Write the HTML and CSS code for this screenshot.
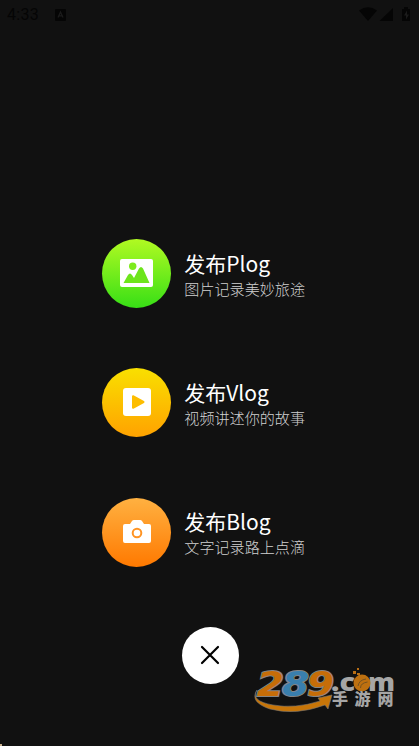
FILE: index.html
```html
<!DOCTYPE html>
<html lang="zh-CN">
<head>
<meta charset="utf-8">
<title>发布</title>
<link rel="stylesheet" href="styles.css">
</head>
<body>
<div class="screen">
  <header class="status">
    <span class="time">4:33</span>
    <svg class="app" width="11" height="12" viewBox="0 0 11 12"><rect width="11" height="12" rx="1" fill="#050505"/><path d="M3 8.5 5.5 3 8 8.5M4 6.8h3" fill="none" stroke="#1b1b1b" stroke-width="1.3"/></svg>
    <svg class="signals" width="54" height="16" viewBox="0 0 54 16" fill="#050505"><path d="M0 3.5Q9-3 18 3.5L9 14Z"/><path d="M34 1v13H20.500Z"/><path d="M45 0h4v2h2v12h-8V2h2z"/><path d="M48 3.500l-3 5h2v4l3-5h-2z" fill="#1b1b1b"/></svg>
  </header>
  <main class="menu">
    <div class="item">
      <span class="disc green"><svg width="33" height="28" viewBox="0 0 33 28"><rect width="33" height="28" rx="2" fill="#fff"/><path d="M3.500 24 8 16Q10 13 12 16L14 19 19 9.500Q21 6.500 23 9.500L29.500 24Z" fill="#6de51b"/><circle cx="12.700" cy="7.300" r="3.700" fill="#7eeb1d"/></svg></span>
      <div class="copy"><h2>发布Plog</h2><p>图片记录美妙旅途</p></div>
    </div>
    <div class="item">
      <span class="disc yellow"><svg width="28" height="28" viewBox="0 0 28 28"><rect width="28" height="28" rx="3" fill="#fff"/><path d="M10 8.200v11.600L20.500 14Z" fill="#fdbd00" stroke="#fdbd00" stroke-width="2" stroke-linejoin="round"/></svg></span>
      <div class="copy"><h2>发布Vlog</h2><p>视频讲述你的故事</p></div>
    </div>
    <div class="item">
      <span class="disc orange"><svg width="28" height="24" viewBox="0 0 28 24"><path d="M2 4H7L9 1Q9.600 0 11 0H17Q18.400 0 19 1L21 4H26Q28 4 28 6V21Q28 23 26 23H2Q0 23 0 21V6Q0 4 2 4Z" fill="#fff"/><circle cx="14" cy="13" r="4.300" fill="none" stroke="#ff9423" stroke-width="2"/></svg></span>
      <div class="copy"><h2>发布Blog</h2><p>文字记录路上点滴</p></div>
    </div>
  </main>
  <button class="close" aria-label="关闭"><svg width="20" height="20" viewBox="0 0 20 20"><path d="M2 2 18 18M18 2 2 18" stroke="#000" stroke-width="2.200" stroke-linecap="round"/></svg></button>
  <svg class="watermark" width="150" height="50" viewBox="0 0 150 50">
    <path d="M7 26Q0 37 23 41Q45 45 70 37L68 34 82 31 78 45 75 41Q45 52 20 45Q-1 38 7 26Z" fill="#c77508" stroke="#777" stroke-width=".6"/>
    <g class="digits">
      <text x="7" y="31.500" textLength="27" lengthAdjust="spacingAndGlyphs" fill="#c66d08">2</text>
      <text x="32" y="31.500" textLength="27" lengthAdjust="spacingAndGlyphs" fill="#397fae">8</text>
      <text x="57" y="31.500" textLength="27" lengthAdjust="spacingAndGlyphs" fill="#c66d08">9</text>
    </g>
    <text class="com" x="81" y="27" textLength="24" lengthAdjust="spacingAndGlyphs">.c</text>
    <text class="com" x="118" y="27" textLength="27" lengthAdjust="spacingAndGlyphs">m</text>
    <circle cx="112" cy="19" r="8.500" fill="#bd7010"/>
    <path d="M108 22q1-6 8-7M110.500 24q0-5 7-6" fill="none" stroke="#77531f" stroke-width="1"/>
    <path d="M103 7h3v3h-3zM107 9h3v2h-3zM107 4h2v2h-2z" fill="#b86e15"/>
    <text class="site" x="82" y="41">手</text><text class="site" x="104.500" y="41">游</text><text class="site" x="127.500" y="41">网</text>
  </svg>
  <i class="speck"></i>
</div>
</body>
</html>
```
FILE: styles.css
```css
* { box-sizing: border-box; }
body { margin: 0; background: #111; }
.screen {
  position: relative;
  width: 419px;
  height: 746px;
  overflow: hidden;
  display: flex;
  flex-direction: column;
  align-items: center;
  background: #111;
  font-family: "Noto Sans CJK SC", sans-serif;
}
.status {
  width: 100%;
  height: 28px;
  padding: 1px 8px 0 7px;
  display: flex;
  align-items: center;
  color: #050505;
}
.time { width: 48px; font: 16px/30px Roboto, sans-serif; letter-spacing: .3px; }
.signals { margin-left: auto; margin-right: -2px; }
.menu {
  width: 215px;
  margin-top: 211px;
  margin-left: .6px;
  display: flex;
  flex-direction: column;
  gap: 60.4px;
}
.item { display: flex; gap: 13px; height: 69px; }
.disc {
  width: 69px;
  height: 69px;
  flex: none;
  border-radius: 50%;
  display: flex;
  align-items: center;
  justify-content: center;
}
.green { background: linear-gradient(#b1fa22, #37df16); }
.yellow { background: linear-gradient(#f9e000, #ffa200); }
.orange { background: linear-gradient(#ffb141, #ff7900); }
.disc svg { position: relative; top: -.5px; }
.copy { padding-top: 9.500px; white-space: nowrap; }
h2 { margin: 0; font-size: 21px; line-height: 29px; font-weight: 400; color: #fff; }
p { margin: 0; font-size: 15.100px; line-height: 21px; font-weight: 300; color: #d0d0d0; }
.close {
  width: 57px;
  height: 57px;
  margin-top: 60px;
  margin-left: 1px;
  padding: 0;
  border: 0;
  border-radius: 50%;
  background: #fff;
  display: flex;
  align-items: center;
  justify-content: center;
}
.watermark { position: absolute; left: 250px; top: 664px; overflow: visible; }
.digits { font: italic 700 33px "DejaVu Sans", sans-serif; stroke: #858585; stroke-width: 2px; paint-order: stroke; }
.com { font: 800 25px "Open Sans", sans-serif; fill: #a6a6a6; }
.site { font: 900 16px "Noto Sans CJK SC", sans-serif; fill: #a6a6a6; }
.speck { position: absolute; left: 0; bottom: 0; width: 2px; height: 2px; background: #c9b08c; }
```
